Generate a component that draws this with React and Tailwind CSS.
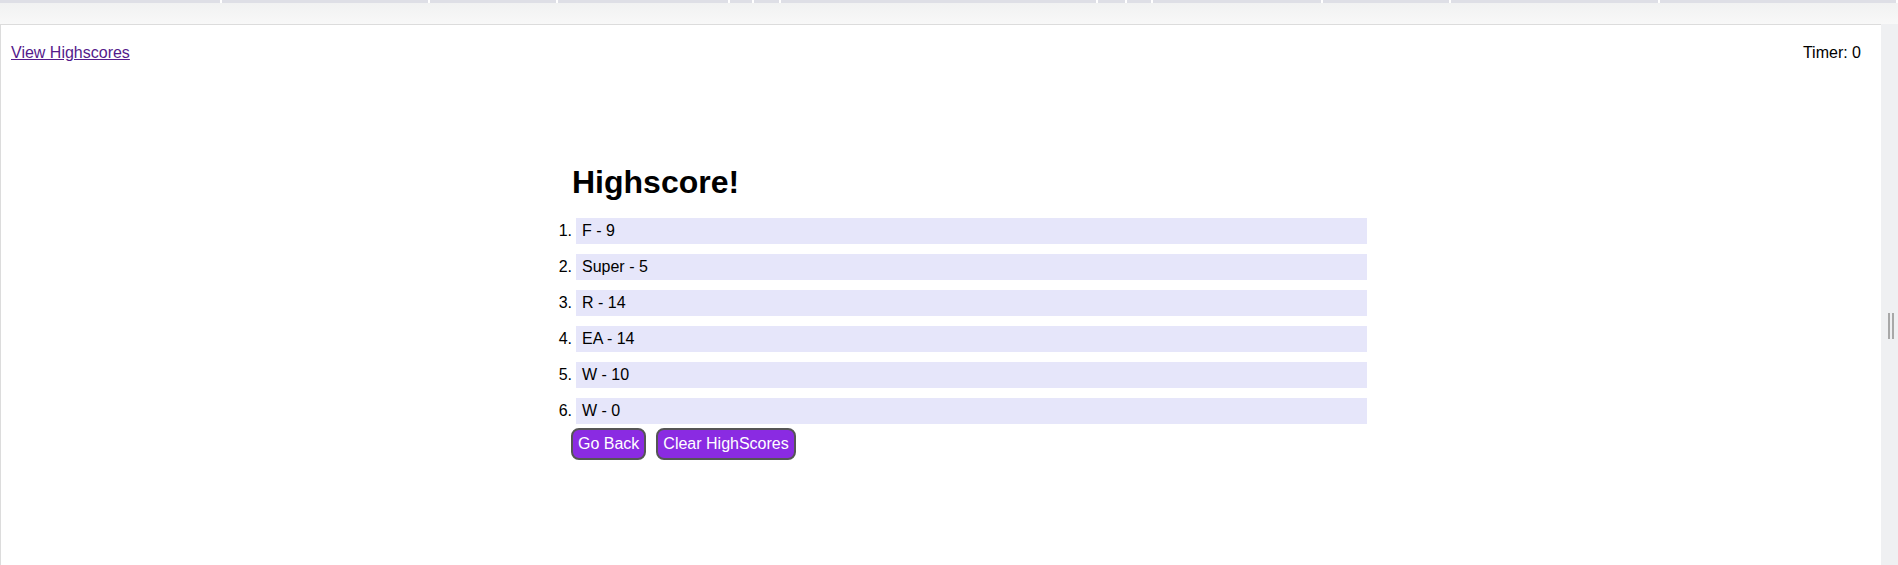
import React from 'react';

const scores = [
  { name: 'F', score: 9 },
  { name: 'Super', score: 5 },
  { name: 'R', score: 14 },
  { name: 'EA', score: 14 },
  { name: 'W', score: 10 },
  { name: 'W', score: 0 },
];

// widths of the tab strip segments at the very top
const tabs = [222, 208, 128, 172, 24, 27, 317, 29, 26, 170, 128, 209, 238];

const App = () => {
  return (
    <div className="w-[1898px] h-[565px] overflow-hidden flex flex-col bg-[#eff0f2] font-['Liberation_Sans',Arial,sans-serif] text-[16px] leading-[18px] text-black">
      <div className="h-[3px] flex bg-[#dedfe6]">
        {tabs.map((w, i) => (
          <div key={i} className="h-full border-r-2 border-white shrink-0" style={{ width: w }} />
        ))}
      </div>
      <div className="h-[21px] bg-gradient-to-b from-[#f1f2f2] to-[#f8f8f8]" />

      <div className="flex flex-1">
        <div className="w-[1881px] bg-white border-t border-l border-[#dcdcdc]">
          <div className="flex justify-between pl-[10px] pr-[20px] pt-[19px]">
            <a href="#" className="text-[#551a8b] underline">View Highscores</a>
            <span>Timer: 0</span>
          </div>

          <div className="ml-[544px] w-[822px] mt-[102px]">
            <h1 className="pl-[27px] text-[32px] leading-[37px] font-bold">Highscore!</h1>
            <ol className="mt-[17px] flex flex-col gap-[10px]">
              {scores.map((s, i) => (
                <li key={i} className="flex">
                  <span className="w-[31px] pr-[4px] py-[4px] text-right">{i + 1}.</span>
                  <span className="flex-1 bg-[#e6e6fa] px-[6px] py-[4px]">{s.name} - {s.score}</span>
                </li>
              ))}
            </ol>
            <div className="pl-[26px] mt-[4px] flex gap-[10px]">
              <button className="bg-[#8a2be2] text-white border-2 border-[#555] rounded-[8px] px-[5px] py-[5px] leading-[18px]">Go Back</button>
              <button className="bg-[#8a2be2] text-white border-2 border-[#555] rounded-[8px] px-[5px] py-[5px] leading-[18px]">Clear HighScores</button>
            </div>
          </div>
        </div>

        <div className="flex-1 flex gap-[2px] pl-[7px] pt-[289px]">
          <div className="w-[2px] h-[26px] bg-[#a8a8a8]" />
          <div className="w-[2px] h-[26px] bg-[#a8a8a8]" />
        </div>
      </div>
    </div>
  );
};

export default App;
